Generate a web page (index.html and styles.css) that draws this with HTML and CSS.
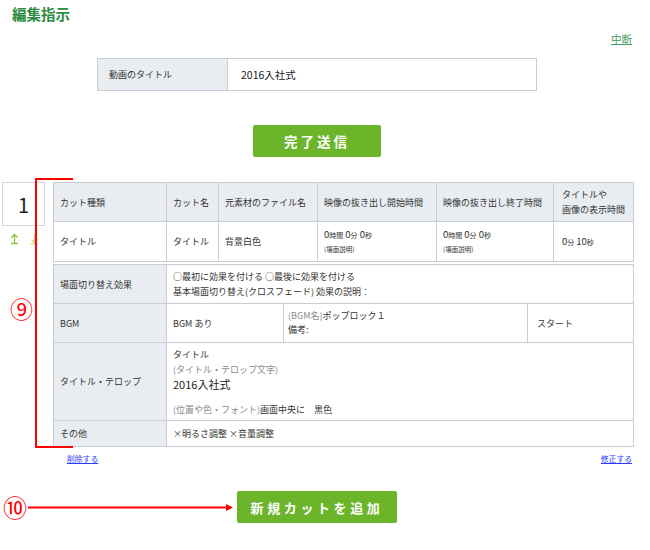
FILE: index.html
```html
<!DOCTYPE html>
<html lang="ja">
<head>
<meta charset="utf-8">
<title>編集指示</title>
<link rel="stylesheet" href="styles.css">
</head>
<body>
<header class="top">
  <h1 class="page-title">編集指示</h1>
  <div class="abort-row"><a class="abort" href="#">中断</a></div>
</header>

<table class="title-table">
  <tr><th class="tt-label">動画のタイトル</th><td class="tt-value">2016入社式</td></tr>
</table>

<div class="submit-row"><button class="btn btn-submit">完了送信</button></div>

<section class="cut">
  <div class="bracket"></div>
  <span class="mark mark9">⑨</span>
  <div class="cut-side">
    <div class="cut-num">1</div>
    <div class="cut-arrows">
      <svg class="arr" width="9" height="12" viewBox="0 0 9 12"><path d="M4.5 1.5V10M1.5 4.5L4.5 1.5L7.5 4.5M1 10.5H8" fill="none" stroke="#8cc63e" stroke-width="1.3"/></svg>
      <svg class="arr" width="9" height="12" viewBox="0 0 9 12"><path d="M4.5 1V9.5M1.5 6.5L4.5 9.5L7.5 6.5M1 10.8H8" fill="none" stroke="#b9dc8a" stroke-width="1.3"/></svg>
    </div>
  </div>
  <div class="cut-body">
    <table class="cut-table">
      <colgroup><col class="w1"><col class="w2"><col class="w3"><col class="w4"><col class="w5"><col class="w6"></colgroup>
      <tr class="head-row">
        <th>カット種類</th><th>カット名</th><th>元素材のファイル名</th><th>映像の抜き出し開始時間</th><th>映像の抜き出し終了時間</th><th class="two-line">タイトルや<br>画像の表示時間</th>
      </tr>
      <tr class="val-row">
        <td>タイトル</td><td>タイトル</td><td>背景白色</td>
        <td class="time"><span class="num">0</span><span class="unit">時間</span>&nbsp;<span class="num">0</span><span class="unit">分</span>&nbsp;<span class="num">0</span><span class="unit">秒</span><br><span class="note">(場面説明)</span></td>
        <td class="time"><span class="num">0</span><span class="unit">時間</span>&nbsp;<span class="num">0</span><span class="unit">分</span>&nbsp;<span class="num">0</span><span class="unit">秒</span><br><span class="note">(場面説明)</span></td>
        <td class="time last-col"><span class="num">0</span><span class="unit">分</span>&nbsp;<span class="num">10</span><span class="unit">秒</span></td>
      </tr>
    </table>

    <table class="detail-table">
      <colgroup><col class="d1"><col class="d2"><col class="d3"><col class="d4"></colgroup>
      <tr class="r-effect">
        <th>場面切り替え効果</th>
        <td colspan="3" class="lines">○最初に効果を付ける ○最後に効果を付ける<br>基本場面切り替え(クロスフェード) 効果の説明：</td>
      </tr>
      <tr class="r-bgm">
        <th>BGM</th>
        <td>BGM あり</td>
        <td class="bgm-name"><span class="gray">(BGM名)</span>ポップロック１<br>備考:</td>
        <td class="bgm-start">スタート</td>
      </tr>
      <tr class="r-title">
        <th>タイトル・テロップ</th>
        <td colspan="3" class="telop">
          <div class="tl">タイトル</div>
          <div class="tl gray">(タイトル・テロップ文字)</div>
          <div class="tl big">2016入社式</div>
          <div class="tl last"><span class="gray">(位置や色・フォント)</span>画面中央に　黒色</div>
        </td>
      </tr>
      <tr class="r-other">
        <th>その他</th>
        <td colspan="3">×明るさ調整 ×音量調整</td>
      </tr>
    </table>

    <div class="cut-links"><a href="#" class="link">削除する</a><a href="#" class="link">修正する</a></div>
  </div>
</section>

<div class="add-row">
  <span class="mark mark10">⑩</span>
  <span class="arrow-line"><svg width="206" height="9" viewBox="0 0 206 9"><path d="M0 4.5H203" stroke="#ff0000" stroke-width="2"/><path d="M198 1L205 4.5L198 8Z" fill="#ff0000"/></svg></span>
  <button class="btn btn-add">新規カットを追加</button>
</div>
</body>
</html>
```

FILE: styles.css
```css
* { box-sizing: border-box; }
html, body { background: #fff; }
body {
  margin: 0;
  width: 650px;
  font-family: "Noto Sans CJK JP", "Noto Sans", sans-serif;
  color: #333;
  font-size: 9px;
}

.page-title {
  margin: 0;
  padding: 4px 0 0 12px;
  font-size: 14.5px;
  line-height: 20px;
  font-weight: bold;
  color: #2a8a3f;
}

.abort-row {
  display: flex;
  justify-content: flex-end;
  padding-right: 18px;
  margin-top: 8px;
}
.abort {
  font-size: 10.5px;
  line-height: 14px;
  color: #3f9d5e;
  text-decoration: underline;
}

.title-table {
  margin: 12px 0 0 97px;
  width: 440px;
  border-collapse: collapse;
  table-layout: fixed;
}
.title-table th, .title-table td {
  border: 1px solid #c9ced6;
  height: 32px;
  padding: 0;
  text-align: left;
  font-weight: normal;
}
.tt-label {
  width: 130px;
  background: #e9edf1;
  padding-left: 11px !important;
  font-size: 9px;
}
.tt-value {
  padding-left: 13px !important;
  font-size: 10.5px;
  color: #222;
}

.submit-row {
  margin-top: 34px;
  padding-left: 253px;
  display: flex;
}
.btn {
  border: 0;
  border-radius: 2px;
  background: #6cb52b;
  color: #fff;
  font-family: inherit;
  font-weight: bold;
  padding: 0;
  cursor: pointer;
}
.btn-submit {
  width: 128px;
  height: 32px;
  font-size: 13.5px;
  letter-spacing: 3px;
}

.cut {
  position: relative;
  margin-top: 25px;
  display: flex;
  padding-left: 2px;
}
.bracket {
  position: absolute;
  left: 35px;
  top: -4px;
  width: 38px;
  height: 270px;
  border: 2px solid #ff0000;
  border-right: 0;
}
.mark {
  color: #ff0000;
  font-family: "Noto Sans CJK JP", sans-serif;
  line-height: 1;
}
.mark9 {
  position: absolute;
  left: 10px;
  top: 115px;
  font-size: 23px;
}

.cut-side {
  width: 43px;
  flex: none;
}
.cut-num {
  height: 44px;
  border: 1px solid #d3d6da;
  background: #fff;
  display: flex;
  align-items: center;
  justify-content: center;
  font-size: 20px;
  color: #222;
}
.cut-arrows {
  display: flex;
  gap: 11px;
  padding: 7px 0 0 8px;
}
.arr { display: block; }

.cut-body {
  margin-left: 8px;
  width: 580px;
}

.cut-table, .detail-table {
  width: 580px;
  border-collapse: collapse;
  table-layout: fixed;
}
.cut-table th, .cut-table td,
.detail-table th, .detail-table td {
  border: 1px solid #c9ced6;
  padding: 0 6px;
  text-align: left;
  font-weight: normal;
  font-size: 9px;
  line-height: 15px;
  vertical-align: middle;
}
.cut-table th, .detail-table th { background: #e9edf1; }
.w1 { width: 113px; }
.w2 { width: 52px; }
.w3 { width: 99px; }
.w4 { width: 119px; }
.w5 { width: 117px; }
.w6 { width: 80px; }

.head-row { height: 39px; }
.val-row { height: 40px; }
.two-line { padding-left: 8px !important; }
.last-col { padding-left: 8px !important; }

.time { line-height: 14px !important; }
.num { font-size: 9.5px; }
.unit { font-size: 7px; }
.note { font-size: 6.5px; }

.detail-table { margin-top: 2px; }
.d1 { width: 113px; }
.d2 { width: 117px; }
.d3 { width: 244px; }
.d4 { width: 106px; }
.r-effect { height: 39px; }
.r-bgm { height: 39px; }
.r-title { height: 78px; }
.r-other { height: 26px; }
.bgm-name { line-height: 14px !important; padding-left: 4px !important; }
.bgm-start { padding-left: 9px !important; }
.gray { color: #8a8a8a; }
.telop { vertical-align: top !important; padding-top: 4px !important; }
.tl { line-height: 15px; }
.tl.big { font-size: 11px; color: #222; }
.tl.last { margin-top: 10px; }

.cut-links {
  display: flex;
  justify-content: space-between;
  padding: 6px 1px 0 14px;
}
.link {
  font-size: 7.8px;
  line-height: 12px;
  color: #2a3cff;
  text-decoration: underline;
}

.add-row {
  margin-top: 26px;
  display: flex;
  align-items: center;
  padding-left: 3px;
}
.mark10 {
  font-size: 24px;
  width: 24px;
}
.arrow-line {
  display: flex;
  margin-left: 1px;
  margin-right: 3px;
}
.arrow-line svg { display: block; }
.btn-add {
  width: 160px;
  height: 32px;
  font-size: 13px;
  letter-spacing: 3.6px;
}
```
